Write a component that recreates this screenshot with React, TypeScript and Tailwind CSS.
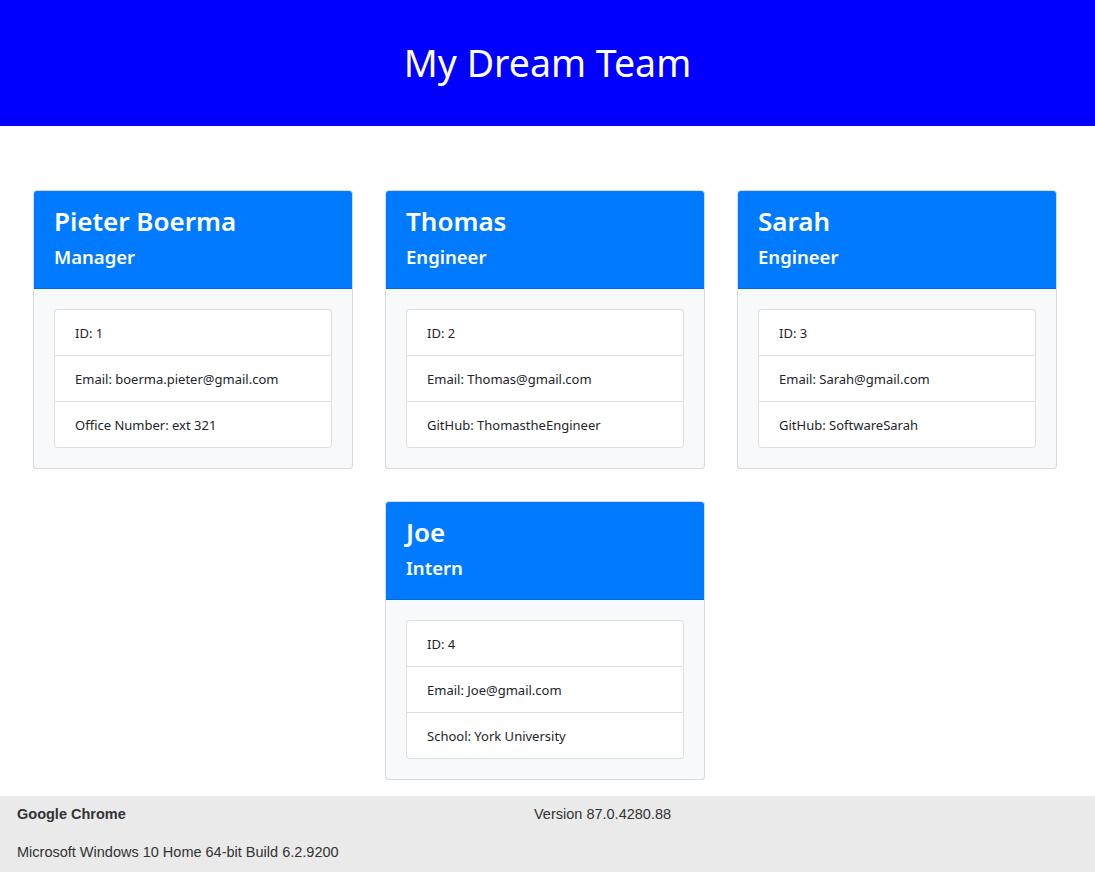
const team = [
  { name: 'Pieter Boerma', role: 'Manager', id: 1, email: 'boerma.pieter@gmail.com', extra: 'Office Number: ext 321' },
  { name: 'Thomas', role: 'Engineer', id: 2, email: 'Thomas@gmail.com', extra: 'GitHub: ThomastheEngineer' },
  { name: 'Sarah', role: 'Engineer', id: 3, email: 'Sarah@gmail.com', extra: 'GitHub: SoftwareSarah' },
  { name: 'Joe', role: 'Intern', id: 4, email: 'Joe@gmail.com', extra: 'School: York University' },
]

function EmployeeCard({ member }: { member: (typeof team)[number] }) {
  return (
    <div className="w-[320px] overflow-hidden rounded-[4px] border border-black/[.125] bg-[#f8f9fa]">
      <div className="border-b border-black/[.125] bg-[#007bff] px-5 py-3 text-white">
        <h2 className="mb-[6px] text-[26px] leading-[36px] font-semibold">{member.name}</h2>
        <h3 className="mb-[7px] text-[18.5px] leading-[24px] font-semibold">{member.role}</h3>
      </div>
      <div className="p-5">
        <ul className="rounded-[4px] border border-black/[.125] bg-white text-[13px] leading-[21px] text-[#212529]">
          <li className="px-5 pt-[13px] pb-[11px]">ID: {member.id}</li>
          <li className="border-t border-black/[.125] px-5 pt-[13px] pb-[11px]">Email: {member.email}</li>
          <li className="border-t border-black/[.125] px-5 pt-[13px] pb-[11px]">{member.extra}</li>
        </ul>
      </div>
    </div>
  )
}

export default function App() {
  return (
    <div className="min-h-[872px] bg-white font-['Noto_Sans',sans-serif]">
      {/* Jumbotron */}
      <header className="flex h-[126px] items-center justify-center bg-[#0000ff]">
        <h1 className="text-[37.5px] font-normal text-white">My Dream Team</h1>
      </header>

      {/* Team cards */}
      <main className="ml-[33px] flex w-[1024px] flex-wrap justify-center gap-x-[32px] gap-y-[32px] pt-[64px]">
        {team.map((member) => (
          <EmployeeCard key={member.id} member={member} />
        ))}
      </main>

      {/* Browser info strip */}
      <footer className="mt-[16px] h-[76px] bg-[#eaeaea] px-[17px] pt-[8px] font-['Liberation_Sans',Arial,sans-serif] text-[14.5px] text-[#333]">
        <div className="grid grid-cols-[517px_1fr] leading-[20px]">
          <span className="font-bold">Google Chrome</span>
          <span>Version 87.0.4280.88</span>
        </div>
        <div className="mt-[18px] leading-[20px]">Microsoft Windows 10 Home 64-bit Build 6.2.9200</div>
      </footer>
    </div>
  )
}
